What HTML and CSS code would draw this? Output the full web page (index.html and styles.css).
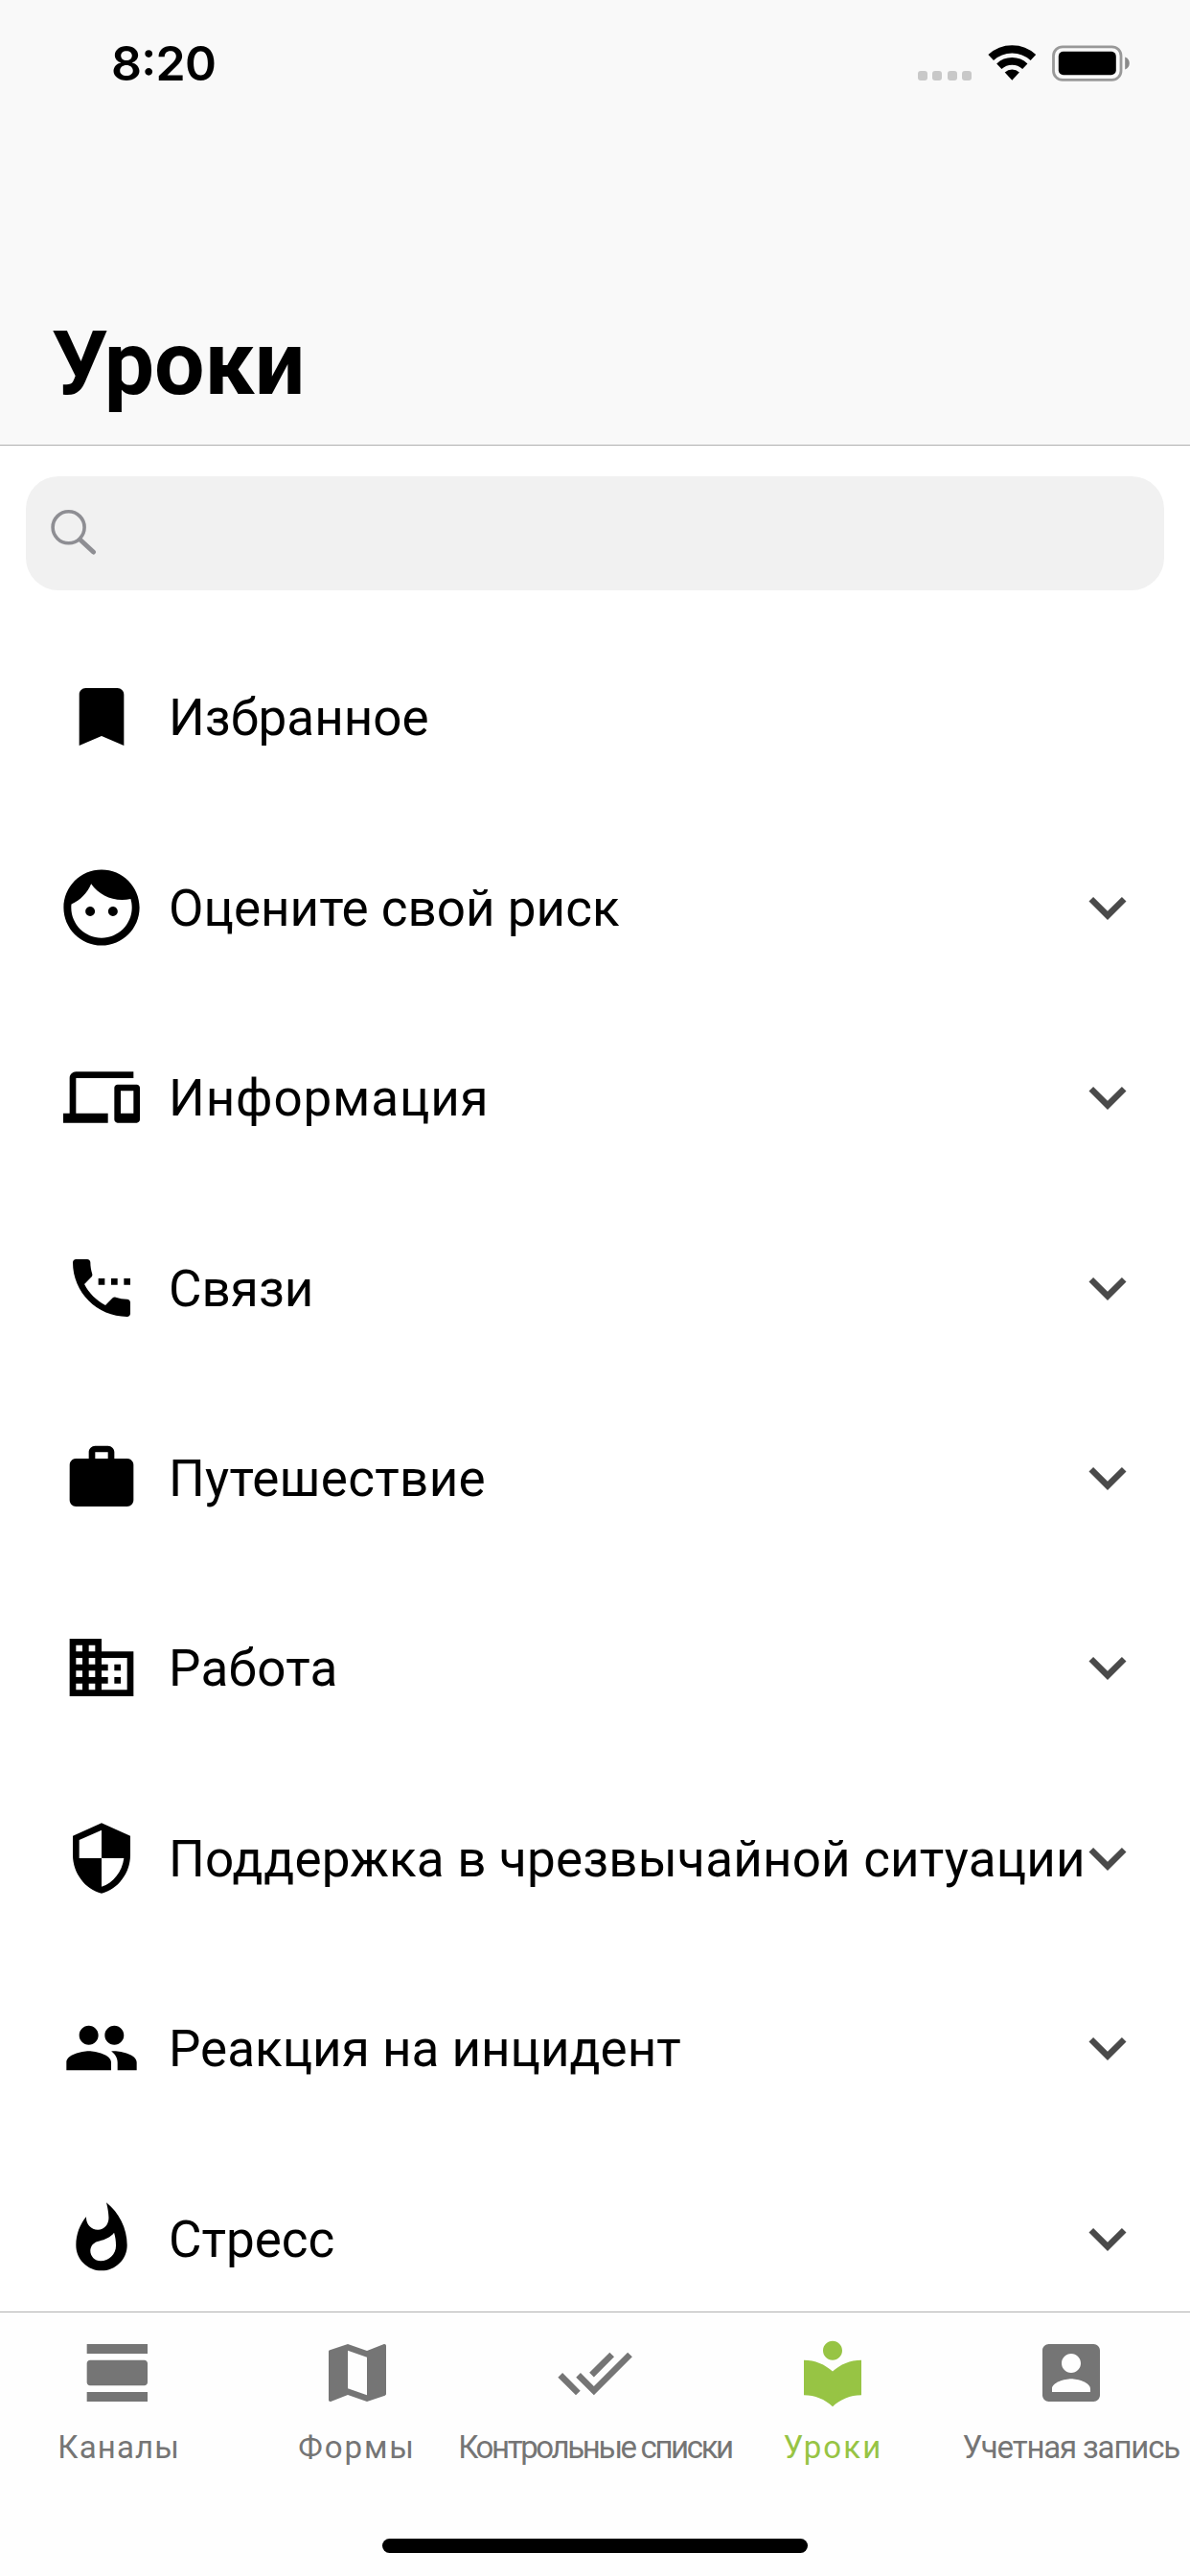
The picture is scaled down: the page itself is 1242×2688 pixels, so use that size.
FILE: index.html
```html
<!DOCTYPE html>
<html lang="ru">
<head>
<meta charset="utf-8">
<title>Уроки</title>
<link rel="stylesheet" href="styles.css">
</head>
<body>
<svg class="sprite" aria-hidden="true">
  <symbol id="chevron" viewBox="0 0 24 24"><path d="M16.59 8.59L12 13.17 7.41 8.59 6 10l6 6 6-6z"/></symbol>
</svg>
<div class="screen">
  <header class="header">
    <div class="status">
      <span class="status__time">8:20</span>
      <div class="status__icons">
        <div class="dots"><i></i><i></i><i></i><i></i></div>
        <svg class="wifi" width="51" height="37" viewBox="0 0 51 37">
          <path d="M3.2 13A32.4 32.4 0 0 1 47.4 13" fill="none" stroke="#000" stroke-width="8.2"/>
          <path d="M11.8 22.2A19.8 19.8 0 0 1 38.8 22.2" fill="none" stroke="#000" stroke-width="7.7"/>
          <path d="M25.3 36.7L17.7 28.5A11.2 11.2 0 0 1 32.9 28.5Z"/>
        </svg>
        <svg class="battery" width="82" height="38" viewBox="0 0 82 38">
          <rect x="1.5" y="1.8" width="70.5" height="34.6" rx="9.5" fill="none" stroke="#999" stroke-width="2.8"/>
          <rect x="6.8" y="6.8" width="60" height="24.4" rx="5"/>
          <path d="M76.2 12.5C79 13.6 80.8 16 80.8 19s-1.8 5.4-4.6 6.5z" fill="#8a8a8a"/>
        </svg>
      </div>
    </div>
    <h1 class="title">Уроки</h1>
  </header>

  <main class="content">
    <div class="search">
      <svg width="48" height="48" viewBox="0 0 48 48" fill="none" stroke="#8e8e93">
        <circle cx="18.6" cy="18.3" r="16.5" stroke-width="3.6"/>
        <path d="M31 31.5L44.5 44" stroke-width="5" stroke-linecap="round"/>
      </svg>
    </div>

    <ul class="list">
      <li class="row">
        <svg class="row__icon" viewBox="0 0 24 24"><path d="M17 3H7c-1.1 0-1.99.9-1.99 2L5 21l7-3 7 3V5c0-1.1-.9-2-2-2z"/></svg>
        <span class="row__text">Избранное</span>
      </li>
      <li class="row">
        <svg class="row__icon" viewBox="1.9 1.9 20.2 20.2"><path d="M9 11.75c-.69 0-1.25.56-1.25 1.25s.56 1.25 1.25 1.25 1.25-.56 1.25-1.25-.56-1.25-1.25-1.25zm6 0c-.69 0-1.25.56-1.25 1.25s.56 1.25 1.25 1.25 1.25-.56 1.25-1.25-.56-1.25-1.25-1.25zM12 2C6.48 2 2 6.48 2 12s4.48 10 10 10 10-4.48 10-10S17.52 2 12 2zm0 18c-4.41 0-8-3.59-8-8 0-.29.02-.58.05-.86 2.36-1.05 4.23-2.98 5.21-5.37C11.07 8.33 14.05 10 17.42 10c.78 0 1.53-.09 2.25-.26.21.71.33 1.47.33 2.26 0 4.41-3.59 8-8 8z"/></svg>
        <span class="row__text">Оцените свой риск</span>
        <svg class="row__chevron"><use href="#chevron"/></svg>
      </li>
      <li class="row">
        <svg class="row__icon" viewBox="0 0 24 24"><path d="M4 6h18V4H4c-1.1 0-2 .9-2 2v11H0v3h14v-3H4V6zm19 2h-6c-.55 0-1 .45-1 1v10c0 .55.45 1 1 1h6c.55 0 1-.45 1-1V9c0-.55-.45-1-1-1zm-1 9h-4v-7h4v7z"/></svg>
        <span class="row__text row__text--wide">Информация</span>
        <svg class="row__chevron"><use href="#chevron"/></svg>
      </li>
      <li class="row">
        <svg class="row__icon" viewBox="0 0 24 24"><path d="M13 9h-2v2h2V9zm4 0h-2v2h2V9zm3 6.5c-1.25 0-2.45-.2-3.57-.57-.35-.11-.74-.03-1.02.24l-2.2 2.2c-2.83-1.44-5.15-3.75-6.59-6.58l2.2-2.21c.28-.27.36-.66.25-1.01C8.7 6.45 8.5 5.25 8.5 4c0-.55-.45-1-1-1H4c-.55 0-1 .45-1 1 0 9.39 7.61 17 17 17 .55 0 1-.45 1-1v-3.5c0-.55-.45-1-1-1zM19 9v2h2V9h-2z"/></svg>
        <span class="row__text">Связи</span>
        <svg class="row__chevron"><use href="#chevron"/></svg>
      </li>
      <li class="row">
        <svg class="row__icon" viewBox="0 0 24 24"><path d="M20 6h-4V4c0-1.11-.89-2-2-2h-4c-1.11 0-2 .89-2 2v2H4c-1.11 0-1.99.89-1.99 2L2 19c0 1.11.89 2 2 2h16c1.11 0 2-.89 2-2V8c0-1.11-.89-2-2-2zm-6 0h-4V4h4v2z"/></svg>
        <span class="row__text row__text--loose">Путешествие</span>
        <svg class="row__chevron"><use href="#chevron"/></svg>
      </li>
      <li class="row">
        <svg class="row__icon" viewBox="0 0 24 24"><path d="M12 7V3H2v18h20V7H12zM6 19H4v-2h2v2zm0-4H4v-2h2v2zm0-4H4V9h2v2zm0-4H4V5h2v2zm4 12H8v-2h2v2zm0-4H8v-2h2v2zm0-4H8V9h2v2zm0-4H8V5h2v2zm10 12h-8v-2h2v-2h-2v-2h2v-2h-2V9h8v10zm-2-8h-2v2h2v-2zm0 4h-2v2h2v-2z"/></svg>
        <span class="row__text row__text--loose">Работа</span>
        <svg class="row__chevron"><use href="#chevron"/></svg>
      </li>
      <li class="row">
        <svg class="row__icon" viewBox="0 0 24 24"><path d="M12 1L3 5v6c0 5.55 3.84 10.74 9 12 5.16-1.26 9-6.45 9-12V5l-9-4zm0 10.99h7c-.53 4.12-3.28 7.79-7 8.94V12H5V6.3l7-3.11v8.8z"/></svg>
        <span class="row__text row__text--long">Поддержка в чрезвычайной ситуации</span>
        <svg class="row__chevron"><use href="#chevron"/></svg>
      </li>
      <li class="row">
        <svg class="row__icon" viewBox="0 0 24 24"><path d="M16 11c1.66 0 2.99-1.34 2.99-3S17.66 5 16 5c-1.66 0-3 1.34-3 3s1.34 3 3 3zm-8 0c1.66 0 2.99-1.34 2.99-3S9.66 5 8 5C6.34 5 5 6.34 5 8s1.34 3 3 3zm0 2c-2.33 0-7 1.17-7 3.5V19h14v-2.5c0-2.33-4.67-3.5-7-3.5zm8 0c-.29 0-.62.02-.97.05 1.16.84 1.97 1.97 1.97 3.45V19h6v-2.5c0-2.33-4.67-3.5-7-3.5z"/></svg>
        <span class="row__text">Реакция на инцидент</span>
        <svg class="row__chevron"><use href="#chevron"/></svg>
      </li>
      <li class="row">
        <svg class="row__icon" viewBox="0 0 24 24"><path d="M13.5.67s.74 2.65.74 4.8c0 2.06-1.35 3.73-3.41 3.73-2.07 0-3.63-1.67-3.63-3.73l.03-.36C5.21 7.51 4 10.62 4 14c0 4.42 3.58 8 8 8s8-3.58 8-8C20 8.61 17.41 3.8 13.5.67zM11.71 19c-1.78 0-3.22-1.4-3.22-3.14 0-1.62 1.05-2.76 2.81-3.12 1.77-.36 3.6-1.21 4.62-2.58.39 1.29.59 2.65.59 4.04 0 2.65-2.15 4.8-4.8 4.8z"/></svg>
        <span class="row__text">Стресс</span>
        <svg class="row__chevron"><use href="#chevron"/></svg>
      </li>
    </ul>
  </main>

  <nav class="tabs">
    <div class="tabs__row">
      <div class="tab tab--channels">
        <svg viewBox="0 0 24 24"><path d="M2 21h19v-3H2v3zM20 8H3c-.55 0-1 .45-1 1v6c0 .55.45 1 1 1h17c.55 0 1-.45 1-1V9c0-.55-.45-1-1-1zM2 3v3h19V3H2z"/></svg>
        <span>Каналы</span>
      </div>
      <div class="tab tab--forms">
        <svg viewBox="0 0 24 24"><path d="M20.5 3l-.16.03L15 5.1 9 3 3.36 4.9c-.21.07-.36.25-.36.48V20.5c0 .28.22.5.5.5l.16-.03L9 18.9l6 2.1 5.64-1.9c.21-.07.36-.25.36-.48V3.5c0-.28-.22-.5-.5-.5zM15 19l-6-2.11V5l6 2.11V19z"/></svg>
        <span>Формы</span>
      </div>
      <div class="tab tab--checklists">
        <svg viewBox="0 0 24 24"><path d="M18 7l-1.41-1.41-6.34 6.34 1.41 1.41L18 7zm4.24-1.41L11.66 16.17 7.48 12l-1.41 1.41L11.66 19l12-12-1.42-1.41zM.41 13.41L6 19l1.41-1.41L1.83 12 .41 13.41z"/></svg>
        <span>Контрольные списки</span>
      </div>
      <div class="tab tab--lessons tab--active">
        <svg viewBox="0 0 24 24"><path d="M12 11.55C9.64 9.35 6.48 8 3 8v11c3.48 0 6.64 1.35 9 3.55 2.36-2.19 5.52-3.55 9-3.55V8c-3.48 0-6.64 1.35-9 3.55zM12 8c1.66 0 3-1.34 3-3s-1.34-3-3-3-3 1.34-3 3 1.34 3 3 3z"/></svg>
        <span>Уроки</span>
      </div>
      <div class="tab tab--account">
        <svg viewBox="0 0 24 24"><path d="M3 5v14c0 1.1.89 2 2 2h14c1.1 0 2-.9 2-2V5c0-1.1-.9-2-2-2H5c-1.11 0-2 .9-2 2zm12 4c0 1.66-1.34 3-3 3s-3-1.34-3-3 1.34-3 3-3 3 1.34 3 3zm-9 8c0-2 4-3.1 6-3.1s6 1.1 6 3.1v1H6v-1z"/></svg>
        <span>Учетная запись</span>
      </div>
    </div>
    <div class="home-indicator"></div>
  </nav>
</div>
</body>
</html>
```
FILE: styles.css
```css
* { box-sizing: border-box; }

body {
  margin: 0;
  background: #fff;
  color: #000;
  font-family: Roboto, "Liberation Sans", sans-serif;
}

.sprite { display: none; }

.screen {
  display: flex;
  flex-direction: column;
  width: 1242px;
  height: 2688px;
  overflow: hidden;
}

/* Header */
.header {
  display: flex;
  flex-direction: column;
  justify-content: space-between;
  flex: none;
  height: 465px;
  padding: 36px 62px 30px 54px;
  background: #f9f9f9;
  border-bottom: 1px solid #b0b0b0;
}

.status {
  display: flex;
  justify-content: space-between;
  height: 60px;
  padding-left: 62px;
}

.status__time {
  font: 600 50px/60px Inter, Roboto, sans-serif;
  letter-spacing: -0.7px;
  font-feature-settings: "calt", "case";
}

.status__icons {
  display: flex;
  align-items: flex-start;
  padding-top: 11px;
}

.dots {
  display: flex;
  gap: 5.4px;
  margin: 27px 17px 0 0;
}

.dots i {
  width: 10px;
  height: 10px;
  border-radius: 3px;
  background: #c8c8c8;
}

.battery { margin-left: 16px; }

.title {
  margin: 0;
  font-size: 93px;
  line-height: 109px;
  font-weight: 700;
}

/* Content */
.content {
  flex: 1;
  min-height: 0;
  overflow: hidden;
}

.search {
  display: flex;
  align-items: center;
  height: 119px;
  margin: 32px 27px 0;
  padding-left: 26px;
  padding-bottom: 2px;
  border-radius: 34px;
  background: #f1f1f1;
}

.list {
  margin: 33px 0 0;
  padding: 0;
  list-style: none;
}

.row {
  display: flex;
  align-items: center;
  height: 198.45px;
  padding: 0 47px 0 66px;
}

.row__icon {
  flex: none;
  width: 80px;
  height: 80px;
}

.row__text {
  flex: 1;
  min-width: 0;
  margin-left: 30px;
  padding-top: 2px;
  font-size: 53px;
  line-height: 62px;
  white-space: nowrap;
}

.row__text--long { letter-spacing: 0.18px; }
.row__text--loose { letter-spacing: 0.3px; }
.row__text--wide { letter-spacing: 0.85px; }

.row__chevron {
  flex: none;
  width: 78px;
  height: 78px;
  fill: #4a4a4a;
}

/* Tab bar */
.tabs {
  display: flex;
  flex-direction: column;
  align-items: center;
  justify-content: space-between;
  flex: none;
  height: 276px;
  padding: 23px 0 24px;
  background: #fefefe;
  border-top: 1px solid #b0b0b0;
}

.tabs__row {
  display: grid;
  grid-template-columns: repeat(5, minmax(0, 1fr));
  width: 100%;
}

.tab {
  display: flex;
  flex-direction: column;
  align-items: center;
  gap: 18px;
  color: #757575;
  font-size: 33px;
  line-height: 39px;
  white-space: nowrap;
}

.tab svg {
  width: 80px;
  height: 80px;
  fill: currentColor;
}

.tab--active { color: #97c444; }
.tab--channels { letter-spacing: 1.15px; }
.tab--forms { letter-spacing: 1.95px; }
.tab--checklists { letter-spacing: -2.38px; }
.tab--lessons { letter-spacing: 2.1px; }
.tab--account { letter-spacing: -1.17px; }

.home-indicator {
  width: 444px;
  height: 15px;
  border-radius: 8px;
  background: #000;
}
```
